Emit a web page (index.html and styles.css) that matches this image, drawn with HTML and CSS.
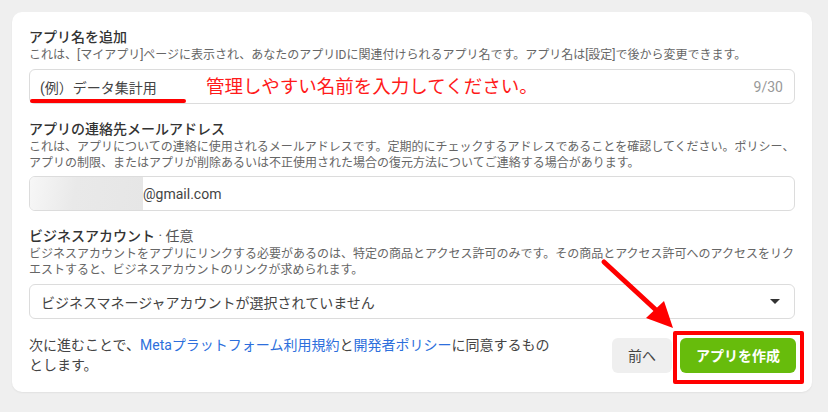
FILE: index.html
```html
<!DOCTYPE html>
<html lang="ja">
<head>
<meta charset="utf-8">
<title>アプリを作成</title>
<link rel="stylesheet" href="styles.css">
</head>
<body>
<div class="card">
  <section class="field first">
    <h2 class="label">アプリ名を追加</h2>
    <p class="desc">これは、[マイアプリ]ページに表示され、あなたのアプリIDに関連付けられるアプリ名です。アプリ名は[設定]で後から変更できます。</p>
    <div class="input">
      <span class="value">(例）データ集計用</span>
      <span class="counter">9/30</span>
      <span class="note">管理しやすい名前を入力してください。</span>
      <span class="underline"></span>
    </div>
  </section>
  <section class="field">
    <h2 class="label">アプリの連絡先メールアドレス</h2>
    <p class="desc">これは、アプリについての連絡に使用されるメールアドレスです。定期的にチェックするアドレスであることを確認してください。ポリシー、<br>アプリの制限、またはアプリが削除あるいは不正使用された場合の復元方法についてご連絡する場合があります。</p>
    <div class="input email">
      <span class="blur"></span>
      <span class="value">@gmail.com</span>
    </div>
  </section>
  <section class="field">
    <h2 class="label">ビジネスアカウント<span class="opt"> · 任意</span></h2>
    <p class="desc">ビジネスアカウントをアプリにリンクする必要があるのは、特定の商品とアクセス許可のみです。その商品とアクセス許可へのアクセスをリク<br>エストすると、ビジネスアカウントのリンクが求められます。</p>
    <div class="input select">
      <span class="value">ビジネスマネージャアカウントが選択されていません</span>
      <span class="caret"></span>
    </div>
  </section>
  <footer class="footer">
    <p class="terms">次に進むことで、<a href="#">Metaプラットフォーム利用規約</a>と<a href="#">開発者ポリシー</a>に同意するもの<br>とします。</p>
    <div class="actions">
      <button class="btn back">前へ</button>
      <button class="btn create">アプリを作成<span class="highlight"></span></button>
    </div>
  </footer>
</div>
<svg class="arrow" width="828" height="412" viewBox="0 0 828 412">
  <line x1="604" y1="262" x2="656" y2="310" stroke="#ff0000" stroke-width="5" stroke-linecap="round"/>
  <polygon points="646,318 664,301 673,328" fill="#ff0000"/>
</svg>
</body>
</html>
```

FILE: styles.css
```css
* { box-sizing: border-box; }
html, body { margin: 0; padding: 0; }
body {
  background: #efefef;
  padding: 12px 16px 20px 12px;
  font-family: Roboto, "Noto Sans CJK JP", sans-serif;
  color: #444;
  position: relative;
  width: 828px;
  height: 412px;
}
.card {
  background: #fff;
  border-radius: 10px;
  width: 800px;
  padding: 15px 17px 17px 17px;
  box-shadow: 0 1px 2px rgba(0,0,0,0.06);
}
.field { margin-top: 15px; }
.field.first { margin-top: 0; }
.label {
  margin: 0;
  font-size: 14px;
  line-height: 20px;
  font-weight: 500;
  color: #333;
}
.opt { font-weight: 400; color: #555; }
.desc {
  margin: 0;
  font-size: 12px;
  line-height: 16px;
  color: #666;
  white-space: nowrap;
}
.input {
  position: relative;
  margin-top: 6px;
  height: 35px;
  border: 1px solid #dcdcdc;
  border-radius: 6px;
  display: flex;
  align-items: center;
  padding: 0 11px 0 10px;
  font-size: 14px;
  color: #444;
}
.email { margin-top: 5px; padding-left: 0; }
.value { flex: 1; white-space: nowrap; }
.counter { color: #999; font-size: 14px; }
.note {
  position: absolute;
  left: 176px;
  top: 5px;
  font-size: 18.5px;
  line-height: 24px;
  color: #ff1a1a;
  white-space: nowrap;
}
.underline {
  position: absolute;
  left: 0;
  top: 29px;
  width: 156px;
  height: 4px;
  background: #ff0000;
  border-radius: 2px;
}
.blur {
  width: 113px;
  align-self: stretch;
  border-radius: 5px 0 0 5px;
  background: linear-gradient(100deg, #f7f7f7 0%, #e9e9e9 40%, #e6e6e6 100%);
}
.email .value { flex: 1; }
.select { padding-left: 11px; padding-right: 14px; font-size: 14px; }
.caret {
  width: 0;
  height: 0;
  border-left: 5px solid transparent;
  border-right: 5px solid transparent;
  border-top: 5px solid #333;
}
.footer {
  margin-top: 16px;
  display: flex;
  align-items: center;
  justify-content: space-between;
}
.terms {
  margin: 0;
  font-size: 14px;
  line-height: 20px;
  color: #444;
}
.terms a { color: #2d6fdc; text-decoration: none; }
.actions { display: flex; gap: 8px; margin-right: -1px; }
.btn {
  height: 35px;
  border: none;
  border-radius: 6px;
  font-family: inherit;
  font-size: 14px;
  cursor: pointer;
}
.back {
  width: 60px;
  background: #efefef;
  color: #444;
}
.create {
  position: relative;
  width: 116px;
  background: #67bc0c;
  color: #fff;
  font-weight: 700;
}
.highlight {
  position: absolute;
  left: -7px;
  top: -7px;
  width: 131px;
  height: 53px;
  border: 4px solid #ff0000;
  border-radius: 2px;
  pointer-events: none;
}
.arrow {
  position: absolute;
  left: 0;
  top: 0;
  pointer-events: none;
}
```
